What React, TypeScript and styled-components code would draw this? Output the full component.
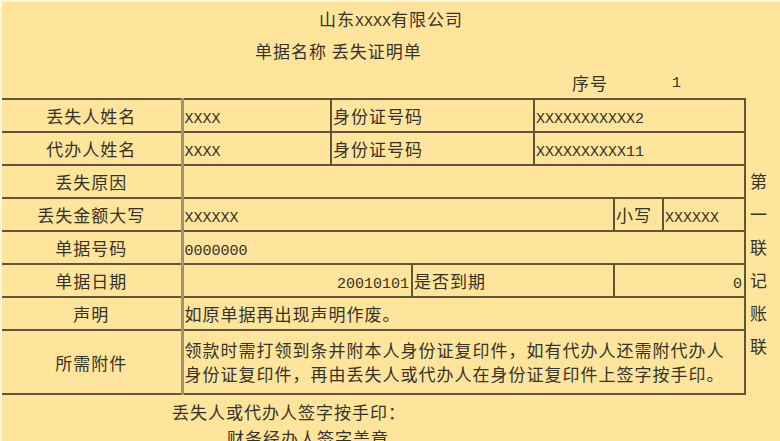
import React from "react";
import styled, { createGlobalStyle } from "styled-components";

const GlobalStyle = createGlobalStyle`
  html, body {
    margin: 0;
    padding: 0;
    background: #fff6dc;
  }
  body {
    font-family: "Noto Sans CJK SC", "Noto Sans", sans-serif;
    color: #353229;
  }
`;

const Page = styled.div`
  width: 778px;
  height: 439px;
  margin: 2px 0 0 2px;
  background: #ffe59b;
  overflow: hidden;
  font-size: 17px;
  letter-spacing: 1px;
`;

const Latin = styled.span`
  font-family: "Liberation Mono", "DejaVu Sans Mono", monospace;
  font-size: 15px;
  letter-spacing: 0;
`;

const Title = styled.div`
  height: 33px;
  line-height: 33px;
  text-align: center;
`;

const SubTitle = styled.div`
  height: 31px;
  line-height: 31px;
  padding-left: 253px;
`;

const SerialRow = styled.div`
  height: 32px;
  display: flex;
  align-items: center;
  padding-left: 570px;
  gap: 64px;
`;

const SerialValue = styled(Latin)`
  padding-top: 3px;
`;

const Body = styled.div`
  display: flex;
  align-items: flex-start;
  margin-left: -2px;
`;

const FormTable = styled.table`
  width: 745px;
  border-collapse: collapse;
  table-layout: fixed;
  border: 2px solid #5f5639;
`;

const Row = styled.tr<{ $tall?: boolean }>`
  height: ${(p) => (p.$tall ? 64 : 33)}px;
`;

const Label = styled.td`
  border: 2px solid #5f5639;
  border-right: 3px solid #a2946a;
  text-align: center;
  vertical-align: middle;
  padding: 0;
  white-space: nowrap;
`;

const Cell = styled.td<{ $align?: "left" | "right" }>`
  border: 2px solid #5f5639;
  padding: 0 2px 0 1px;
  text-align: ${(p) => p.$align ?? "left"};
  vertical-align: middle;
  white-space: nowrap;
  overflow: hidden;
`;

const TextCell = styled.td`
  border: 2px solid #5f5639;
  padding: 0 2px 0 1px;
  vertical-align: middle;
  line-height: 24px;
  white-space: nowrap;
`;

const SideLabel = styled.div`
  display: flex;
  flex-direction: column;
  padding-top: 66px;
  padding-left: 4px;
`;

const SideChar = styled.span`
  height: 33px;
  line-height: 33px;
`;

const Footer = styled.div`
  display: flex;
  flex-direction: column;
  padding-top: 4px;
`;

const FooterLine = styled.div<{ $indent: number }>`
  height: 26px;
  line-height: 26px;
  padding-left: ${(p) => p.$indent}px;
`;

const cols = [181, 149, 81, 122, 80, 49, 82];

export default function App() {
  return (
    <>
      <GlobalStyle />
      <Page>
        <Title>
          山东<Latin>XXXX</Latin>有限公司
        </Title>
        <SubTitle>单据名称 丢失证明单</SubTitle>
        <SerialRow>
          <span>序号</span>
          <SerialValue>1</SerialValue>
        </SerialRow>
        <Body>
          <FormTable>
            <colgroup>
              {cols.map((w, i) => (
                <col key={i} style={{ width: w }} />
              ))}
            </colgroup>
            <tbody>
              <Row>
                <Label>丢失人姓名</Label>
                <Cell><Latin>XXXX</Latin></Cell>
                <Cell colSpan={2}>身份证号码</Cell>
                <Cell colSpan={3}><Latin>XXXXXXXXXXX2</Latin></Cell>
              </Row>
              <Row>
                <Label>代办人姓名</Label>
                <Cell><Latin>XXXX</Latin></Cell>
                <Cell colSpan={2}>身份证号码</Cell>
                <Cell colSpan={3}><Latin>XXXXXXXXXX11</Latin></Cell>
              </Row>
              <Row>
                <Label>丢失原因</Label>
                <Cell colSpan={6} />
              </Row>
              <Row>
                <Label>丢失金额大写</Label>
                <Cell colSpan={4}><Latin>XXXXXX</Latin></Cell>
                <Cell>小写</Cell>
                <Cell><Latin>XXXXXX</Latin></Cell>
              </Row>
              <Row>
                <Label>单据号码</Label>
                <Cell colSpan={6}><Latin>0000000</Latin></Cell>
              </Row>
              <Row>
                <Label>单据日期</Label>
                <Cell colSpan={2} $align="right"><Latin>20010101</Latin></Cell>
                <Cell colSpan={2}>是否到期</Cell>
                <Cell colSpan={2} $align="right"><Latin>0</Latin></Cell>
              </Row>
              <Row>
                <Label>声明</Label>
                <Cell colSpan={6}>如原单据再出现声明作废。</Cell>
              </Row>
              <Row $tall>
                <Label>所需附件</Label>
                <TextCell colSpan={6}>
                  领款时需打领到条并附本人身份证复印件，如有代办人还需附代办人
                  <br />
                  身份证复印件，再由丢失人或代办人在身份证复印件上签字按手印。
                </TextCell>
              </Row>
            </tbody>
          </FormTable>
          <SideLabel>
            {["第", "一", "联", "记", "账", "联"].map((c, i) => (
              <SideChar key={i}>{c}</SideChar>
            ))}
          </SideLabel>
        </Body>
        <Footer>
          <FooterLine $indent={170}>丢失人或代办人签字按手印：</FooterLine>
          <FooterLine $indent={225}>财务经办人签字盖章</FooterLine>
        </Footer>
      </Page>
    </>
  );
}
